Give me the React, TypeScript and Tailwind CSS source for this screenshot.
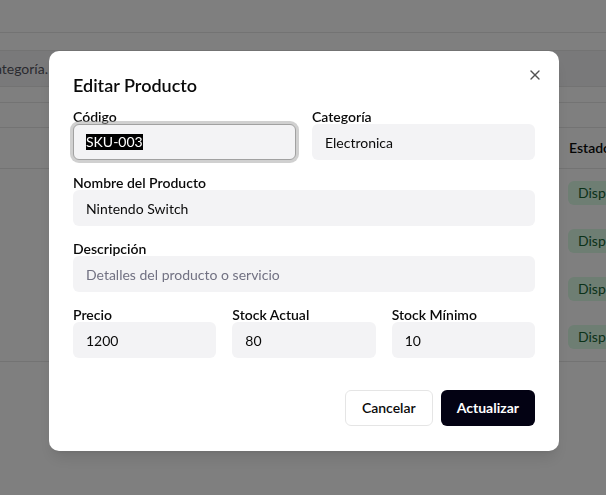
import { X } from 'lucide-react';

const filas = [0, 1, 2, 3];

interface CampoProps {
  label: string;
  value?: string;
  placeholder?: string;
}

const Campo = ({ label, value, placeholder }: CampoProps) => (
  <div className="flex flex-col">
    <label className="h-[14px] text-sm leading-none font-semibold text-[#0a0a0a]">{label}</label>
    <input
      readOnly
      value={value ?? ''}
      placeholder={placeholder}
      className="h-9 w-full rounded-md border border-transparent bg-[#f3f3f5] px-3 text-sm text-[#0a0a0a] outline-none placeholder:text-[#717182]"
    />
  </div>
);

export default function App() {
  return (
    <div className="relative h-[495px] w-[606px] overflow-hidden bg-white font-['Lato','Liberation_Sans',sans-serif] text-[#0a0a0a]">
      {/* Página de fondo */}
      <div className="h-[33px] border-b border-[#e6e6e6]" />
      <div className="h-[17px]" />
      <div className="flex h-[37px] items-center border-y border-[#e6e6e6] bg-[#f3f3f5]">
        <div className="flex w-[48px] justify-end overflow-hidden">
          <span className="whitespace-nowrap text-sm text-[#555560]">Buscar por nombre, código o categoría.</span>
        </div>
      </div>
      <div className="h-[16px] border-b border-[#e6e6e6]" />
      <div className="h-[25px] border-b border-[#e6e6e6]" />
      <div className="flex h-[41px] items-center border-b border-[#e6e6e6] pl-[569px]">
        <span className="text-sm font-semibold whitespace-nowrap">Estado</span>
      </div>
      <div className="border-b border-[#e6e6e6]">
        {filas.map((f) => (
          <div key={f} className="flex h-12 items-center pl-[568px]">
            <span className="rounded-md bg-[#dcfce7] px-2.5 py-[2px] text-sm whitespace-nowrap text-[#166534]">Disponible</span>
          </div>
        ))}
      </div>

      {/* Overlay */}
      <div className="fixed inset-0 bg-black/50" />

      {/* Modal */}
      <div className="fixed left-[49px] top-[51px] w-[510px] rounded-[10px] bg-white px-6 pt-[25px] pb-[25px] shadow-lg">
        <button type="button" className="absolute right-4 top-4 text-[#0a0a0a] opacity-70">
          <X className="h-4 w-4" />
        </button>
        <h2 className="h-[18px] text-lg leading-none font-semibold">Editar Producto</h2>

        <div className="mt-4 flex flex-col gap-4">
          <div className="grid grid-cols-2 gap-4">
            <div className="flex flex-col">
              <label className="h-[14px] text-sm leading-none font-semibold">Código</label>
              <div className="flex h-9 items-center rounded-md border border-[#a1a1a1] bg-[#f3f3f5] px-3 ring-[3px] ring-[#a1a1a1]/50">
                <span className="bg-black text-sm leading-[16px] text-white">SKU-003</span>
              </div>
            </div>
            <Campo label="Categoría" value="Electronica" />
          </div>
          <Campo label="Nombre del Producto" value="Nintendo Switch" />
          <Campo label="Descripción" placeholder="Detalles del producto o servicio" />
          <div className="grid grid-cols-3 gap-4">
            <Campo label="Precio" value="1200" />
            <Campo label="Stock Actual" value="80" />
            <Campo label="Stock Mínimo" value="10" />
          </div>
        </div>

        <div className="mt-8 flex justify-end gap-2">
          <button type="button" className="h-9 rounded-md border border-[#e5e5e5] bg-white px-4 text-sm font-semibold">
            Cancelar
          </button>
          <button type="button" className="h-9 rounded-md bg-[#030213] px-4 text-sm font-bold text-white">
            Actualizar
          </button>
        </div>
      </div>
    </div>
  );
}
